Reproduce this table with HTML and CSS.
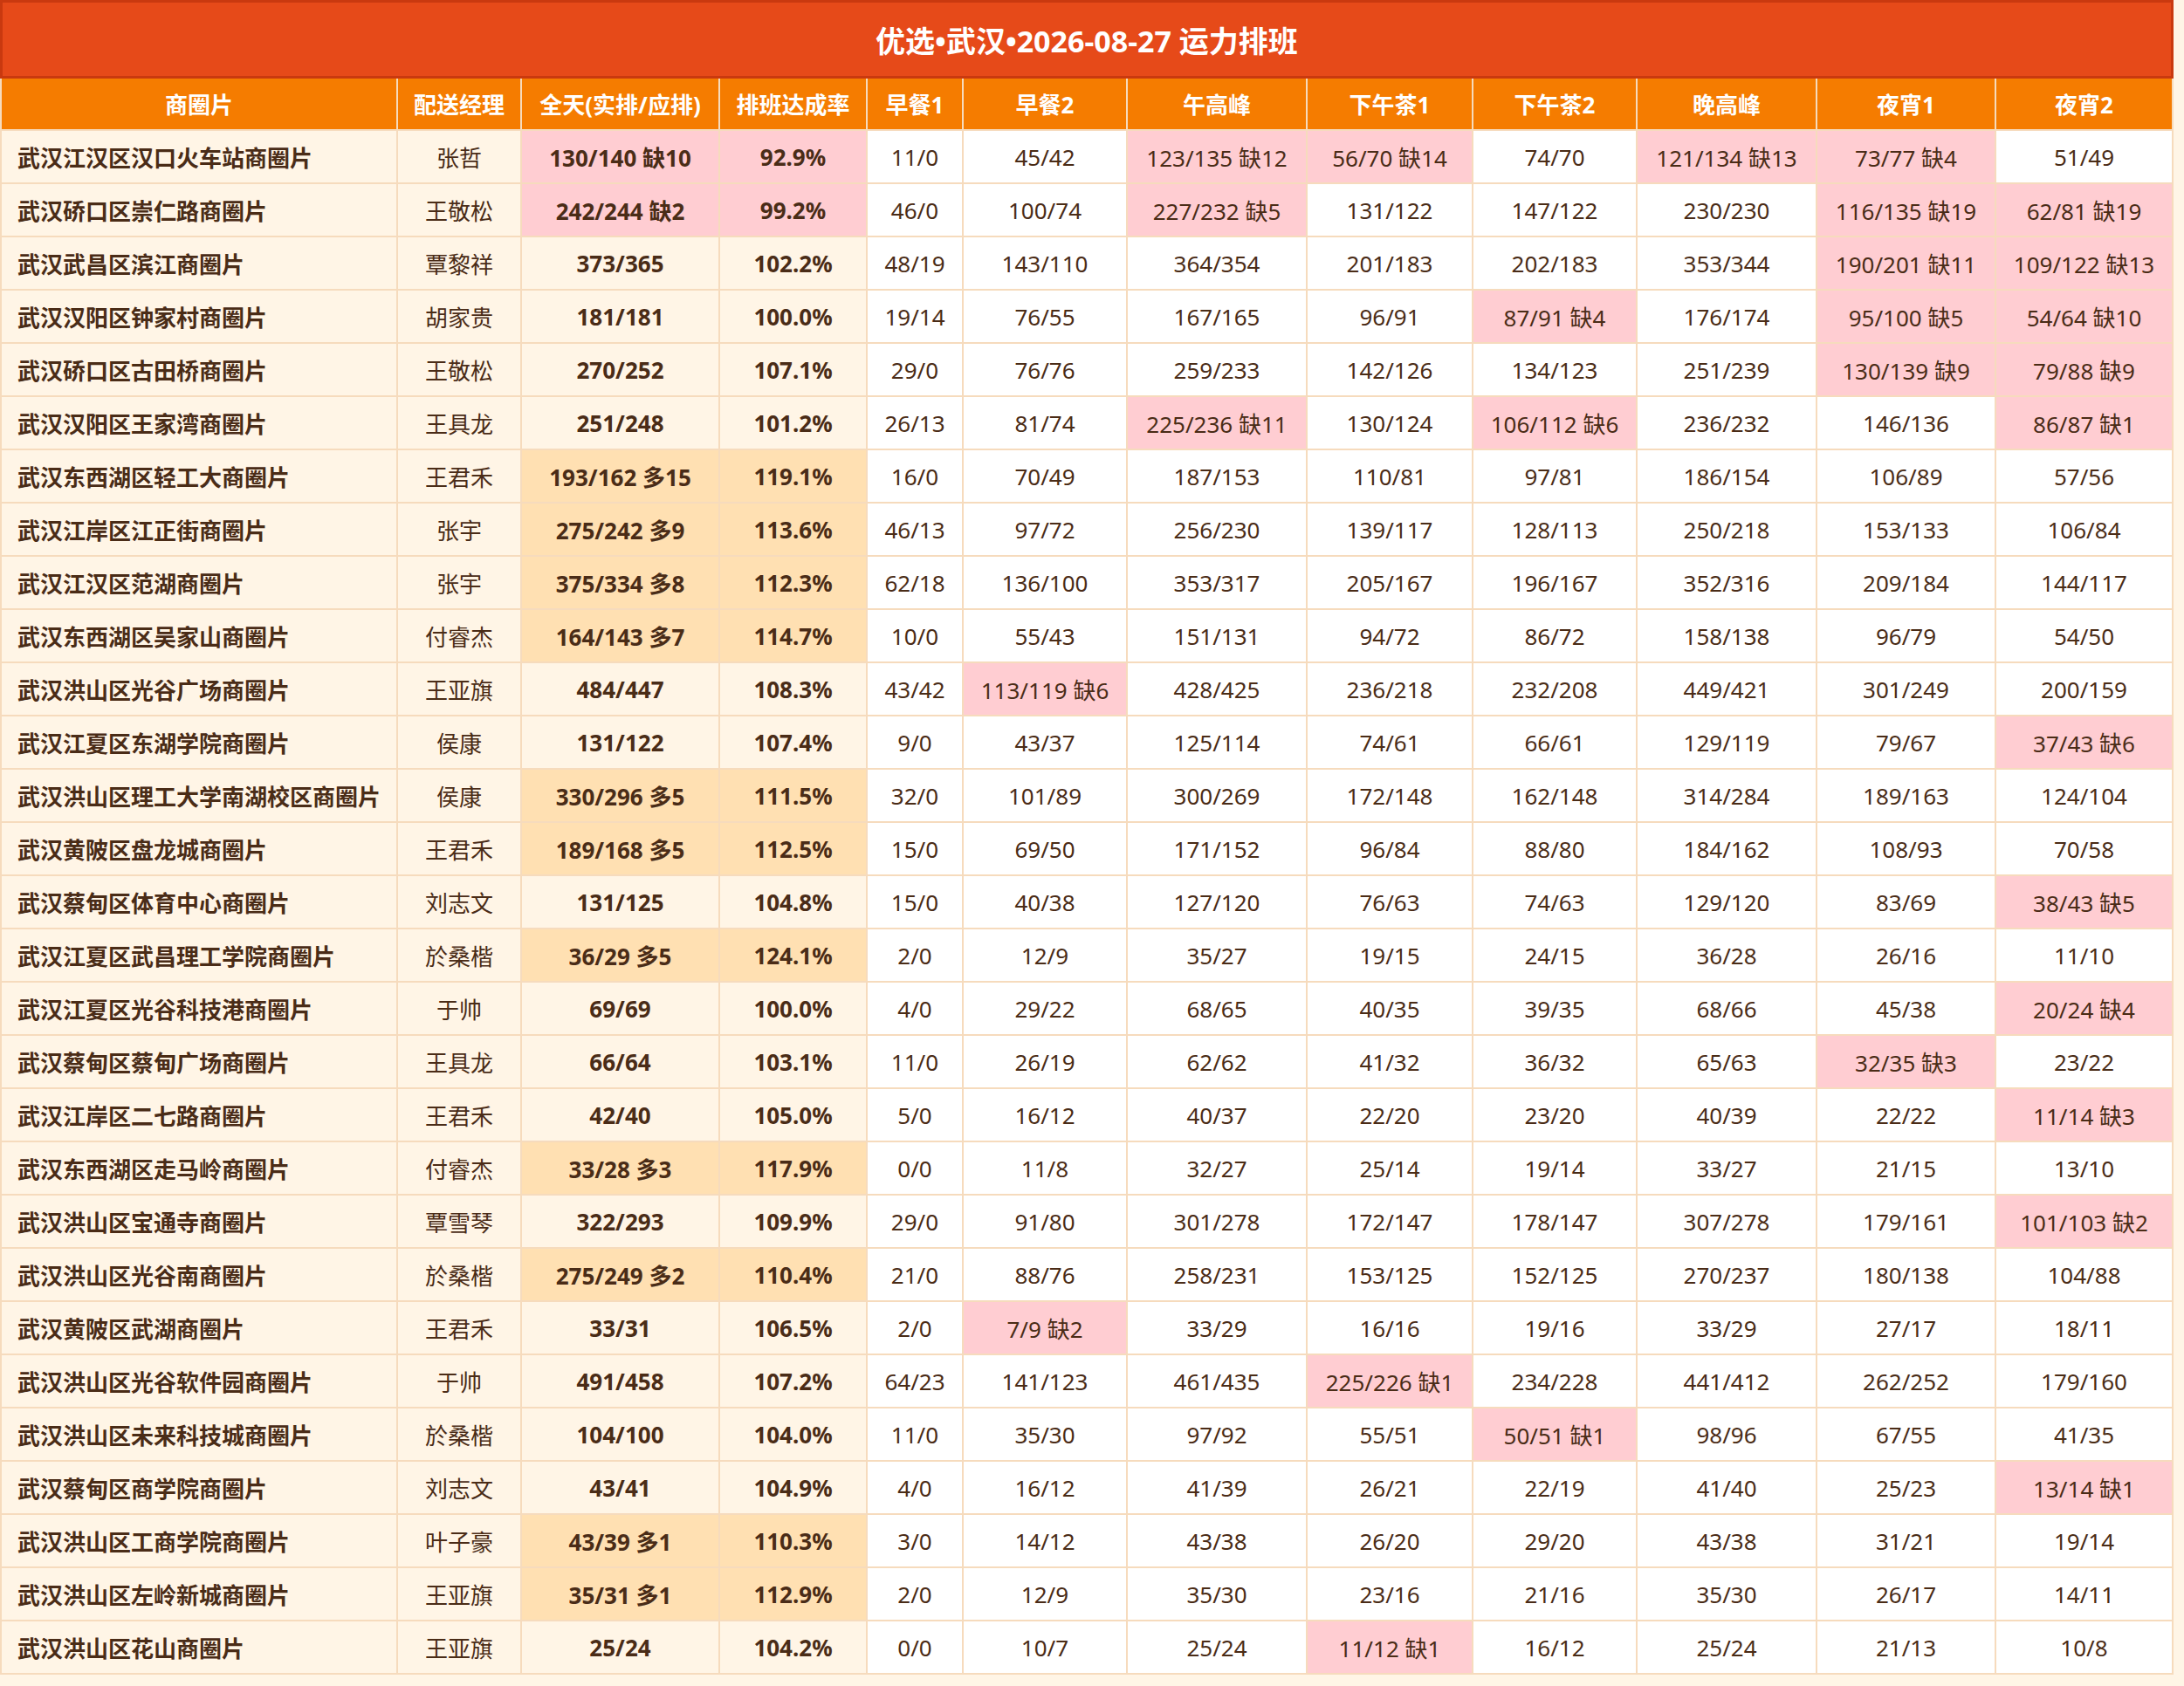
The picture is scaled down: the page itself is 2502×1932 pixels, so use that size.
FILE: index.html
```html
<!DOCTYPE html>
<html lang="zh-CN">
<head>
<meta charset="utf-8">
<title>优选•武汉•2026-08-27 运力排班</title>
<link rel="stylesheet" href="styles.css">
</head>
<body>
<div class="page">
  <div class="title">优选•武汉•2026-08-27 运力排班</div>
  <div class="grid">
    <div class="row head">
      <span>商圈片</span><span>配送经理</span><span>全天(实排/应排)</span><span>排班达成率</span><span>早餐1</span><span>早餐2</span><span>午高峰</span><span>下午茶1</span><span>下午茶2</span><span>晚高峰</span><span>夜宵1</span><span>夜宵2</span>
    </div>
    <div class="row"><span class="name">武汉江汉区汉口火车站商圈片</span><span class="mgr">张哲</span><span class="sum lack">130/140 缺10</span><span class="sum lack">92.9%</span><span class="slot">11/0</span><span class="slot">45/42</span><span class="slot lack">123/135 缺12</span><span class="slot lack">56/70 缺14</span><span class="slot">74/70</span><span class="slot lack">121/134 缺13</span><span class="slot lack">73/77 缺4</span><span class="slot">51/49</span></div>
    <div class="row"><span class="name">武汉硚口区崇仁路商圈片</span><span class="mgr">王敬松</span><span class="sum lack">242/244 缺2</span><span class="sum lack">99.2%</span><span class="slot">46/0</span><span class="slot">100/74</span><span class="slot lack">227/232 缺5</span><span class="slot">131/122</span><span class="slot">147/122</span><span class="slot">230/230</span><span class="slot lack">116/135 缺19</span><span class="slot lack">62/81 缺19</span></div>
    <div class="row"><span class="name">武汉武昌区滨江商圈片</span><span class="mgr">覃黎祥</span><span class="sum">373/365</span><span class="sum">102.2%</span><span class="slot">48/19</span><span class="slot">143/110</span><span class="slot">364/354</span><span class="slot">201/183</span><span class="slot">202/183</span><span class="slot">353/344</span><span class="slot lack">190/201 缺11</span><span class="slot lack">109/122 缺13</span></div>
    <div class="row"><span class="name">武汉汉阳区钟家村商圈片</span><span class="mgr">胡家贵</span><span class="sum">181/181</span><span class="sum">100.0%</span><span class="slot">19/14</span><span class="slot">76/55</span><span class="slot">167/165</span><span class="slot">96/91</span><span class="slot lack">87/91 缺4</span><span class="slot">176/174</span><span class="slot lack">95/100 缺5</span><span class="slot lack">54/64 缺10</span></div>
    <div class="row"><span class="name">武汉硚口区古田桥商圈片</span><span class="mgr">王敬松</span><span class="sum">270/252</span><span class="sum">107.1%</span><span class="slot">29/0</span><span class="slot">76/76</span><span class="slot">259/233</span><span class="slot">142/126</span><span class="slot">134/123</span><span class="slot">251/239</span><span class="slot lack">130/139 缺9</span><span class="slot lack">79/88 缺9</span></div>
    <div class="row"><span class="name">武汉汉阳区王家湾商圈片</span><span class="mgr">王具龙</span><span class="sum">251/248</span><span class="sum">101.2%</span><span class="slot">26/13</span><span class="slot">81/74</span><span class="slot lack">225/236 缺11</span><span class="slot">130/124</span><span class="slot lack">106/112 缺6</span><span class="slot">236/232</span><span class="slot">146/136</span><span class="slot lack">86/87 缺1</span></div>
    <div class="row"><span class="name">武汉东西湖区轻工大商圈片</span><span class="mgr">王君禾</span><span class="sum over">193/162 多15</span><span class="sum over">119.1%</span><span class="slot">16/0</span><span class="slot">70/49</span><span class="slot">187/153</span><span class="slot">110/81</span><span class="slot">97/81</span><span class="slot">186/154</span><span class="slot">106/89</span><span class="slot">57/56</span></div>
    <div class="row"><span class="name">武汉江岸区江正街商圈片</span><span class="mgr">张宇</span><span class="sum over">275/242 多9</span><span class="sum over">113.6%</span><span class="slot">46/13</span><span class="slot">97/72</span><span class="slot">256/230</span><span class="slot">139/117</span><span class="slot">128/113</span><span class="slot">250/218</span><span class="slot">153/133</span><span class="slot">106/84</span></div>
    <div class="row"><span class="name">武汉江汉区范湖商圈片</span><span class="mgr">张宇</span><span class="sum over">375/334 多8</span><span class="sum over">112.3%</span><span class="slot">62/18</span><span class="slot">136/100</span><span class="slot">353/317</span><span class="slot">205/167</span><span class="slot">196/167</span><span class="slot">352/316</span><span class="slot">209/184</span><span class="slot">144/117</span></div>
    <div class="row"><span class="name">武汉东西湖区吴家山商圈片</span><span class="mgr">付睿杰</span><span class="sum over">164/143 多7</span><span class="sum over">114.7%</span><span class="slot">10/0</span><span class="slot">55/43</span><span class="slot">151/131</span><span class="slot">94/72</span><span class="slot">86/72</span><span class="slot">158/138</span><span class="slot">96/79</span><span class="slot">54/50</span></div>
    <div class="row"><span class="name">武汉洪山区光谷广场商圈片</span><span class="mgr">王亚旗</span><span class="sum">484/447</span><span class="sum">108.3%</span><span class="slot">43/42</span><span class="slot lack">113/119 缺6</span><span class="slot">428/425</span><span class="slot">236/218</span><span class="slot">232/208</span><span class="slot">449/421</span><span class="slot">301/249</span><span class="slot">200/159</span></div>
    <div class="row"><span class="name">武汉江夏区东湖学院商圈片</span><span class="mgr">侯康</span><span class="sum">131/122</span><span class="sum">107.4%</span><span class="slot">9/0</span><span class="slot">43/37</span><span class="slot">125/114</span><span class="slot">74/61</span><span class="slot">66/61</span><span class="slot">129/119</span><span class="slot">79/67</span><span class="slot lack">37/43 缺6</span></div>
    <div class="row"><span class="name">武汉洪山区理工大学南湖校区商圈片</span><span class="mgr">侯康</span><span class="sum over">330/296 多5</span><span class="sum over">111.5%</span><span class="slot">32/0</span><span class="slot">101/89</span><span class="slot">300/269</span><span class="slot">172/148</span><span class="slot">162/148</span><span class="slot">314/284</span><span class="slot">189/163</span><span class="slot">124/104</span></div>
    <div class="row"><span class="name">武汉黄陂区盘龙城商圈片</span><span class="mgr">王君禾</span><span class="sum over">189/168 多5</span><span class="sum over">112.5%</span><span class="slot">15/0</span><span class="slot">69/50</span><span class="slot">171/152</span><span class="slot">96/84</span><span class="slot">88/80</span><span class="slot">184/162</span><span class="slot">108/93</span><span class="slot">70/58</span></div>
    <div class="row"><span class="name">武汉蔡甸区体育中心商圈片</span><span class="mgr">刘志文</span><span class="sum">131/125</span><span class="sum">104.8%</span><span class="slot">15/0</span><span class="slot">40/38</span><span class="slot">127/120</span><span class="slot">76/63</span><span class="slot">74/63</span><span class="slot">129/120</span><span class="slot">83/69</span><span class="slot lack">38/43 缺5</span></div>
    <div class="row"><span class="name">武汉江夏区武昌理工学院商圈片</span><span class="mgr">於桑楷</span><span class="sum over">36/29 多5</span><span class="sum over">124.1%</span><span class="slot">2/0</span><span class="slot">12/9</span><span class="slot">35/27</span><span class="slot">19/15</span><span class="slot">24/15</span><span class="slot">36/28</span><span class="slot">26/16</span><span class="slot">11/10</span></div>
    <div class="row"><span class="name">武汉江夏区光谷科技港商圈片</span><span class="mgr">于帅</span><span class="sum">69/69</span><span class="sum">100.0%</span><span class="slot">4/0</span><span class="slot">29/22</span><span class="slot">68/65</span><span class="slot">40/35</span><span class="slot">39/35</span><span class="slot">68/66</span><span class="slot">45/38</span><span class="slot lack">20/24 缺4</span></div>
    <div class="row"><span class="name">武汉蔡甸区蔡甸广场商圈片</span><span class="mgr">王具龙</span><span class="sum">66/64</span><span class="sum">103.1%</span><span class="slot">11/0</span><span class="slot">26/19</span><span class="slot">62/62</span><span class="slot">41/32</span><span class="slot">36/32</span><span class="slot">65/63</span><span class="slot lack">32/35 缺3</span><span class="slot">23/22</span></div>
    <div class="row"><span class="name">武汉江岸区二七路商圈片</span><span class="mgr">王君禾</span><span class="sum">42/40</span><span class="sum">105.0%</span><span class="slot">5/0</span><span class="slot">16/12</span><span class="slot">40/37</span><span class="slot">22/20</span><span class="slot">23/20</span><span class="slot">40/39</span><span class="slot">22/22</span><span class="slot lack">11/14 缺3</span></div>
    <div class="row"><span class="name">武汉东西湖区走马岭商圈片</span><span class="mgr">付睿杰</span><span class="sum over">33/28 多3</span><span class="sum over">117.9%</span><span class="slot">0/0</span><span class="slot">11/8</span><span class="slot">32/27</span><span class="slot">25/14</span><span class="slot">19/14</span><span class="slot">33/27</span><span class="slot">21/15</span><span class="slot">13/10</span></div>
    <div class="row"><span class="name">武汉洪山区宝通寺商圈片</span><span class="mgr">覃雪琴</span><span class="sum">322/293</span><span class="sum">109.9%</span><span class="slot">29/0</span><span class="slot">91/80</span><span class="slot">301/278</span><span class="slot">172/147</span><span class="slot">178/147</span><span class="slot">307/278</span><span class="slot">179/161</span><span class="slot lack">101/103 缺2</span></div>
    <div class="row"><span class="name">武汉洪山区光谷南商圈片</span><span class="mgr">於桑楷</span><span class="sum over">275/249 多2</span><span class="sum over">110.4%</span><span class="slot">21/0</span><span class="slot">88/76</span><span class="slot">258/231</span><span class="slot">153/125</span><span class="slot">152/125</span><span class="slot">270/237</span><span class="slot">180/138</span><span class="slot">104/88</span></div>
    <div class="row"><span class="name">武汉黄陂区武湖商圈片</span><span class="mgr">王君禾</span><span class="sum">33/31</span><span class="sum">106.5%</span><span class="slot">2/0</span><span class="slot lack">7/9 缺2</span><span class="slot">33/29</span><span class="slot">16/16</span><span class="slot">19/16</span><span class="slot">33/29</span><span class="slot">27/17</span><span class="slot">18/11</span></div>
    <div class="row"><span class="name">武汉洪山区光谷软件园商圈片</span><span class="mgr">于帅</span><span class="sum">491/458</span><span class="sum">107.2%</span><span class="slot">64/23</span><span class="slot">141/123</span><span class="slot">461/435</span><span class="slot lack">225/226 缺1</span><span class="slot">234/228</span><span class="slot">441/412</span><span class="slot">262/252</span><span class="slot">179/160</span></div>
    <div class="row"><span class="name">武汉洪山区未来科技城商圈片</span><span class="mgr">於桑楷</span><span class="sum">104/100</span><span class="sum">104.0%</span><span class="slot">11/0</span><span class="slot">35/30</span><span class="slot">97/92</span><span class="slot">55/51</span><span class="slot lack">50/51 缺1</span><span class="slot">98/96</span><span class="slot">67/55</span><span class="slot">41/35</span></div>
    <div class="row"><span class="name">武汉蔡甸区商学院商圈片</span><span class="mgr">刘志文</span><span class="sum">43/41</span><span class="sum">104.9%</span><span class="slot">4/0</span><span class="slot">16/12</span><span class="slot">41/39</span><span class="slot">26/21</span><span class="slot">22/19</span><span class="slot">41/40</span><span class="slot">25/23</span><span class="slot lack">13/14 缺1</span></div>
    <div class="row"><span class="name">武汉洪山区工商学院商圈片</span><span class="mgr">叶子豪</span><span class="sum over">43/39 多1</span><span class="sum over">110.3%</span><span class="slot">3/0</span><span class="slot">14/12</span><span class="slot">43/38</span><span class="slot">26/20</span><span class="slot">29/20</span><span class="slot">43/38</span><span class="slot">31/21</span><span class="slot">19/14</span></div>
    <div class="row"><span class="name">武汉洪山区左岭新城商圈片</span><span class="mgr">王亚旗</span><span class="sum over">35/31 多1</span><span class="sum over">112.9%</span><span class="slot">2/0</span><span class="slot">12/9</span><span class="slot">35/30</span><span class="slot">23/16</span><span class="slot">21/16</span><span class="slot">35/30</span><span class="slot">26/17</span><span class="slot">14/11</span></div>
    <div class="row"><span class="name">武汉洪山区花山商圈片</span><span class="mgr">王亚旗</span><span class="sum">25/24</span><span class="sum">104.2%</span><span class="slot">0/0</span><span class="slot">10/7</span><span class="slot">25/24</span><span class="slot lack">11/12 缺1</span><span class="slot">16/12</span><span class="slot">25/24</span><span class="slot">21/13</span><span class="slot">10/8</span></div>
  </div>
</div>
</body>
</html>
```
FILE: styles.css
```css
html, body {
  margin: 0;
  padding: 0;
  background: #fff5e6;
}
body {
  font-family: "Noto Sans", "Noto Sans CJK SC", sans-serif;
  color: #4a2c17;
}
.page {
  width: 2490px;
}
.title {
  height: 84px;
  box-sizing: content-box;
  border: 3px solid #c9390f;
  background: #e64a19;
  color: #ffffff;
  font-weight: 700;
  font-size: 34px;
  display: flex;
  align-items: center;
  justify-content: center;
}
.grid {
  display: flex;
  flex-direction: column;
  gap: 2px;
  background: #f6dbbd;
  padding: 0 2px 2px;
}
.row {
  display: grid;
  grid-template-columns: 452px 140px 225px 167px 108px 186px 204px 188px 186px 204px 203px 201px;
  gap: 2px;
}
.row > span {
  height: 59px;
  display: flex;
  align-items: center;
  justify-content: center;
  font-size: 26px;
  white-space: nowrap;
  background: #ffffff;
}
.row.head > span {
  height: 58px;
  background: #f57c00;
  color: #ffffff;
  font-weight: 700;
}
.row.head {
  column-gap: 2px;
}
.row.head > span + span {
  box-shadow: none;
}
.row > .name {
  justify-content: flex-start;
  padding-left: 18px;
  font-weight: 700;
  background: #fff5e6;
}
.row > .mgr {
  background: #fff5e6;
}
.row > .sum {
  font-weight: 700;
  background: #fff5e6;
}
.row > .slot {
  background: #ffffff;
}
.row > .lack {
  background: #ffcdd2;
}
.row > .over {
  background: #ffe0b2;
}
```
